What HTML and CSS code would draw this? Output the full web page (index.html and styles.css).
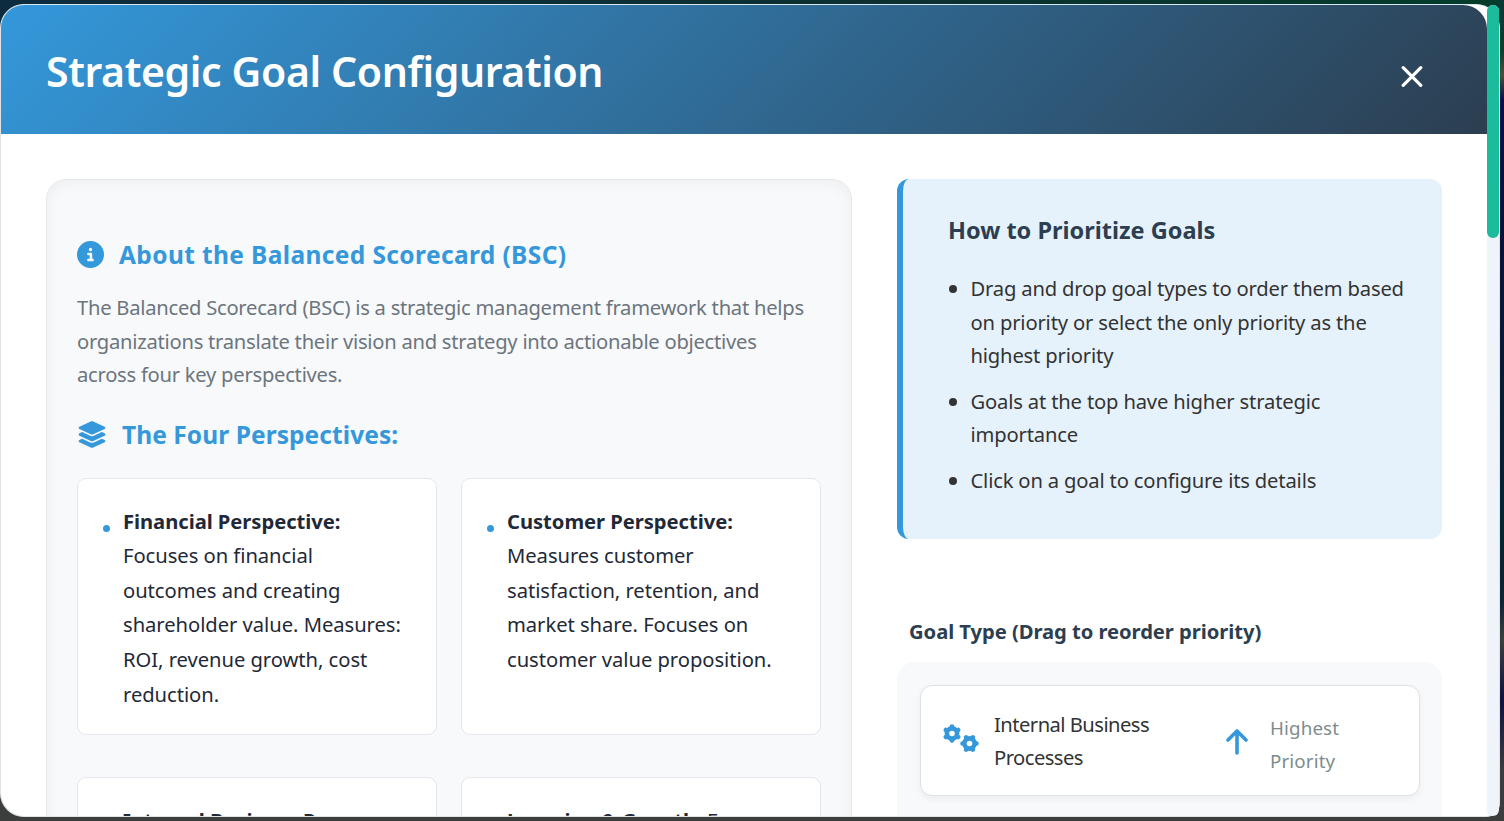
FILE: index.html
```html
<!DOCTYPE html>
<html lang="en">
<head>
<meta charset="utf-8">
<title>Strategic Goal Configuration</title>
<link rel="stylesheet" href="styles.css">
</head>
<body>
<div class="modal">
  <div class="modal-main">
    <header class="modal-header">
      <h1 class="modal-title">Strategic Goal Configuration</h1>
      <button class="close" aria-label="Close"><svg width="22" height="22" viewBox="0 0 22 22"><path d="M2.2 1.700 19.8 19.300M19.8 1.700 2.2 19.300"/></svg></button>
    </header>
    <div class="modal-body">
      <section class="about">
        <h2 class="about-heading">
          <svg class="icon-info" viewBox="0 0 512 512"><path fill="currentColor" d="M256 512A256 256 0 1 0 256 0a256 256 0 1 0 0 512zM216 336h24V272H216c-13.300 0-24-10.700-24-24s10.700-24 24-24h48c13.300 0 24 10.700 24 24v88h8c13.300 0 24 10.700 24 24s-10.700 24-24 24H216c-13.300 0-24-10.700-24-24s10.700-24 24-24zm40-208a32 32 0 1 1 0 64 32 32 0 1 1 0-64z"/></svg>
          <span class="wide">About the Balanced Scorecard (BSC)</span>
        </h2>
        <p class="about-text">The Balanced Scorecard (BSC) is a strategic management framework that helps<br>organizations translate their vision and strategy into actionable objectives<br>across four key perspectives.</p>
        <h2 class="about-heading perspectives-heading">
          <svg class="icon-layers" viewBox="0 0 576 512"><path fill="currentColor" d="M264.500 5.200c14.900-6.900 32.100-6.900 47 0l218.600 101c8.500 3.900 13.900 12.400 13.900 21.800s-5.400 17.900-13.900 21.800l-218.600 101c-14.900 6.900-32.100 6.900-47 0L45.900 149.800C37.400 145.800 32 137.300 32 128s5.400-17.900 13.900-21.800L264.500 5.200zM476.900 209.600l53.200 24.600c8.500 3.900 13.900 12.400 13.900 21.800s-5.400 17.900-13.900 21.800l-218.600 101c-14.900 6.900-32.100 6.900-47 0L45.900 277.800C37.400 273.800 32 265.300 32 256s5.400-17.900 13.900-21.800l53.200-24.600 152 70.200c23.400 10.800 50.400 10.800 73.800 0l152-70.200zm-152 198.200l152-70.200 53.200 24.600c8.500 3.900 13.900 12.400 13.900 21.800s-5.400 17.900-13.900 21.800l-218.600 101c-14.900 6.900-32.100 6.900-47 0L45.900 405.800C37.400 401.800 32 393.300 32 384s5.400-17.900 13.900-21.800l53.200-24.600 152 70.200c23.400 10.800 50.400 10.800 73.800 0z"/></svg>
          <span>The Four Perspectives:</span>
        </h2>
        <div class="cards">
          <article class="card"><i class="dot"></i><p><strong>Financial Perspective:</strong><br>Focuses on financial<br>outcomes and creating<br>shareholder value. Measures:<br>ROI, revenue growth, cost<br>reduction.</p></article>
          <article class="card"><i class="dot"></i><p><strong>Customer Perspective:</strong><br>Measures customer<br>satisfaction, retention, and<br>market share. Focuses on<br>customer value proposition.</p></article>
          <article class="card"><p><strong>Internal Business Pro</strong></p></article>
          <article class="card"><p><strong>Learning &amp; Growth:</strong> F</p></article>
        </div>
      </section>
      <section class="goals">
        <div class="tips">
          <h3 class="tips-title">How to Prioritize Goals</h3>
          <ul class="tips-list">
            <li>Drag and drop goal types to order them based<br>on priority or select the only priority as the<br>highest priority</li>
            <li>Goals at the top have higher strategic<br>importance</li>
            <li>Click on a goal to configure its details</li>
          </ul>
        </div>
        <div class="goal-label">Goal Type (Drag to reorder priority)</div>
        <div class="goal-list">
          <div class="goal">
            <svg class="icon-gears" viewBox="0 0 36 30">
              <defs>
                <g id="gear" fill="none" stroke="currentColor">
                  <circle r="5.100" stroke-width="4.600"/>
                  <path stroke-width="4.600" stroke-linecap="round" d="M0-6V-7M0 6V7M5.200-3 6.100-3.500M-5.200 3-6.100 3.500M5.200 3 6.100 3.500M-5.200-3-6.100-3.500"/>
                </g>
              </defs>
              <use href="#gear" transform="translate(9 9.500)"/>
              <use href="#gear" transform="translate(26.500 19.500) rotate(90)"/>
            </svg>
            <div class="goal-name">Internal Business<br>Processes</div>
            <svg class="icon-up" viewBox="0 0 22 26"><path d="M11 24V2M2 11l9-9 9 9"/></svg>
            <div class="goal-priority">Highest<br>Priority</div>
          </div>
        </div>
      </section>
    </div>
  </div>
  <div class="scrollbar"><div class="thumb"></div></div>
</div>
</body>
</html>
```
FILE: styles.css
```css
* { box-sizing: border-box; }
body {
  margin: 0;
  height: 821px;
  padding-top: 4px;
  overflow: hidden;
  font-family: "Noto Sans", "Open Sans", sans-serif;
  background:
    linear-gradient(#0b3a34, #0c3d2c 50px, #48503c 75px, #09104a 100px, #0a1238 250px, #062433 500px, #0a2534 600px, #3c3f3c 640px, #111040 700px, #3c3c3e 770px) right / 6px 100% no-repeat,
    linear-gradient(90deg, #0d2c3e, #0c3030 60%, #043d2b) top / 100% 26px no-repeat,
    #3c3d3d;
}
h1, h2, h3, p, ul { margin: 0; white-space: nowrap; }
.modal {
  display: flex;
  width: 1500px;
  height: 813px;
  border: 1px solid #dfe3e6;
  border-top-color: #d9e9f2;
  border-radius: 24px;
  border-bottom-right-radius: 14px;
  background: #fff;
}
.modal-main { width: 1486px; flex: none; border-radius: 23px 0 0 23px; overflow: hidden; }
.modal-header {
  display: flex;
  justify-content: space-between;
  height: 129px;
  padding: 0 64px 0 45px;
  border-radius: 0 24px 0 0;
  background: linear-gradient(135deg, #3498db, #2c3e50);
}
.modal-title { font-size: 41px; font-weight: 600; line-height: 133px; letter-spacing: -.37px; color: #fff; }
.close { width: 22px; height: 22px; margin-top: 61px; padding: 0; border: 0; background: none; }
.close svg { display: block; fill: none; stroke: #fff; stroke-width: 3.2; stroke-linecap: round; }
.modal-body {
  display: grid;
  grid-template-columns: 806px 545px;
  gap: 45px;
  height: 683px;
  padding: 45px 45px 0;
  overflow: hidden;
}
.about {
  height: 900px;
  padding: 54px 30px 0;
  border: 1px solid #e5e8eb;
  border-radius: 20px;
  background: #f8f9fb;
  box-shadow: inset 0 2px 15px rgba(0, 0, 0, .05);
}
.about-heading {
  display: flex;
  align-items: center;
  gap: 15px;
  height: 40px;
  font-size: 24.500px;
  font-weight: 700;
  letter-spacing: .07px;
  color: #3498db;
}
.wide { letter-spacing: .38px; }
.icon-info { width: 27px; height: 27px; }
.icon-layers { width: 30px; height: 27px; }
.about-text { margin-top: 17px; font-size: 20.200px; line-height: 33.600px; letter-spacing: -.26px; color: #6c757d; }
.perspectives-heading { margin-top: 23px; }
.cards { display: grid; grid-template-columns: 360px 360px; grid-auto-rows: 257px; gap: 42px 24px; margin-top: 23px; }
.card {
  display: flex;
  padding: 25px 24px 24px 45px;
  border: 1px solid #e4e7eb;
  border-radius: 9px;
  background: #fff;
  font-size: 20.200px;
  line-height: 34.560px;
  letter-spacing: -.04px;
  color: #1f2937;
}
.dot { width: 7px; height: 7px; margin: 21px 13px 0 -20px; border-radius: 50%; background: #3498db; }
.tips { height: 360px; padding: 31px 0 0 45px; border-left: 6px solid #3498db; border-radius: 12px; background: #e6f2fb; }
.tips-title { font-size: 23.500px; font-weight: 700; line-height: 40px; letter-spacing: 0; color: #2c3e50; }
.tips-list { margin-top: 22px; padding-left: 22.500px; font-size: 20.200px; line-height: 33.600px; letter-spacing: -.17px; color: #333; list-style: none; }
.tips-list li { margin-bottom: 12px; }
.tips-list li::before { content: ""; float: left; width: 8px; height: 8px; margin: 13px 0 0 -22px; border-radius: 50%; background: #333; }
.goal-label { margin: 75px 0 0 12px; font-size: 20.200px; font-weight: 700; line-height: 34px; letter-spacing: -.05px; color: #2c3e50; white-space: nowrap; }
.goal-list { height: 300px; margin-top: 14px; padding: 23px 22px 0 23px; border-radius: 18px; background: #f8f9fb; }
.goal {
  display: flex;
  height: 111px;
  padding: 21px 22px;
  border: 1px solid #dee1e5;
  border-radius: 12px;
  background: #fff;
  box-shadow: 0 3px 7px rgba(0, 0, 0, .05);
  line-height: 33.400px;
  white-space: nowrap;
}
.icon-gears { width: 36px; height: 30px; margin-top: 17px; color: #3498db; }
.goal-name { width: 232px; margin: .5px 0 0 15px; font-size: 20.200px; letter-spacing: -.54px; color: #333; }
.icon-up { width: 22px; height: 26px; margin-top: 22px; fill: none; stroke: #3498db; stroke-width: 3.6; stroke-linecap: round; stroke-linejoin: round; }
.goal-priority { margin: 4.500px 0 0 22px; font-size: 18.800px; letter-spacing: .12px; color: #7f8c8d; }
.scrollbar { width: 12px; height: 811px; flex: none; border-radius: 6px; background: #eff3fa; }
.thumb { height: 233px; border-radius: 6px; background: #1abc9c; }
```
